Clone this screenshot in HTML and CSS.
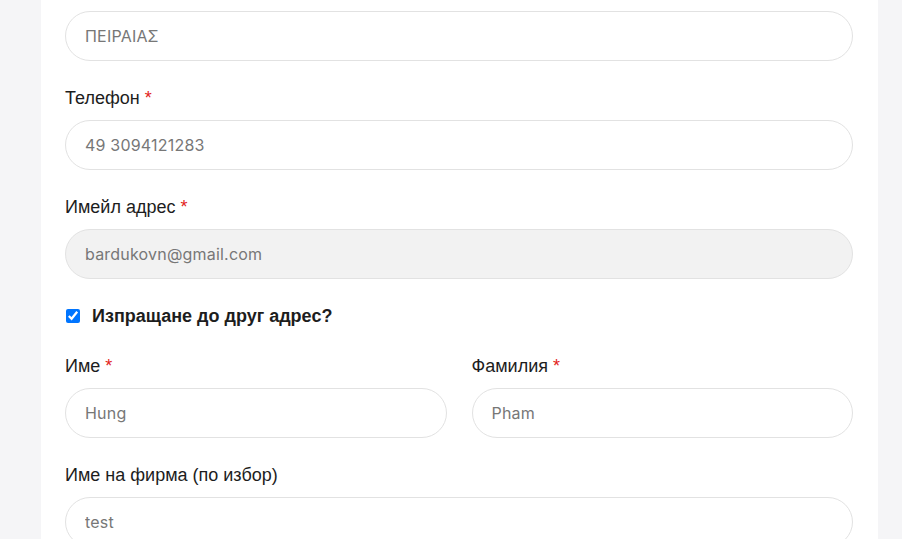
FILE: index.html
```html
<!DOCTYPE html>
<html lang="bg">
<head>
<meta charset="utf-8">
<title>Checkout</title>
<link rel="stylesheet" href="styles.css">
</head>
<body>
<div class="page">
  <form class="panel">
    <div class="field">
      <input class="input" type="text" value="ΠΕΙΡΑΙΑΣ">
    </div>
    <div class="field">
      <label class="label">Телефон <span class="req">*</span></label>
      <input class="input" type="text" value="49 3094121283">
    </div>
    <div class="field">
      <label class="label">Имейл адрес <span class="req">*</span></label>
      <input class="input input-readonly" type="text" value="bardukovn@gmail.com" readonly>
    </div>
    <label class="ship">
      <input class="check" type="checkbox" checked>
      <span class="ship-text">Изпращане до друг адрес?</span>
    </label>
    <div class="row">
      <div class="field">
        <label class="label">Име <span class="req">*</span></label>
        <input class="input" type="text" value="Hung">
      </div>
      <div class="field">
        <label class="label">Фамилия <span class="req">*</span></label>
        <input class="input" type="text" value="Pham">
      </div>
    </div>
    <div class="field">
      <label class="label">Име на фирма (по избор)</label>
      <input class="input" type="text" value="test">
    </div>
  </form>
</div>
</body>
</html>
```

FILE: styles.css
```css
html, body {
  margin: 0;
  padding: 0;
}
body {
  background: #f5f5f7;
  font-family: "Liberation Sans", Arial, sans-serif;
  overflow: hidden;
}
.page {
  padding-left: 41px;
  width: 837px;
}
.panel {
  background: #ffffff;
  padding: 11px 25px 40px 24px;
  border-top: 1px solid #f3f3f3;
  margin-top: -1px;
  min-height: 560px;
  box-sizing: border-box;
}
.field {
  display: flex;
  flex-direction: column;
  margin-bottom: 24px;
}
.label {
  display: block;
  font-size: 18px;
  line-height: 27px;
  color: #1d1d1d;
  margin-bottom: 8px;
}
.req {
  color: #e2231a;
}
.input {
  box-sizing: border-box;
  height: 50px;
  width: 100%;
  border: 1px solid #e2e2e2;
  border-radius: 25px;
  background: #ffffff;
  padding: 0 19px;
  font-family: Inter, "Open Sans", sans-serif;
  font-size: 16px;
  letter-spacing: 0.2px;
  color: #777777;
  outline: none;
}
.input-readonly {
  background: #f2f2f2;
}
.ship {
  display: flex;
  align-items: center;
  gap: 12px;
  margin: 0 0 24px 1px;
  height: 26px;
}
.check {
  margin: 0;
  width: 14px;
  height: 14px;
  accent-color: #0075ff;
}
.ship-text {
  font-weight: bold;
  font-size: 18px;
  color: #1d1d1d;
}
.row {
  display: grid;
  grid-template-columns: 1fr 1fr;
  column-gap: 25px;
}
```
